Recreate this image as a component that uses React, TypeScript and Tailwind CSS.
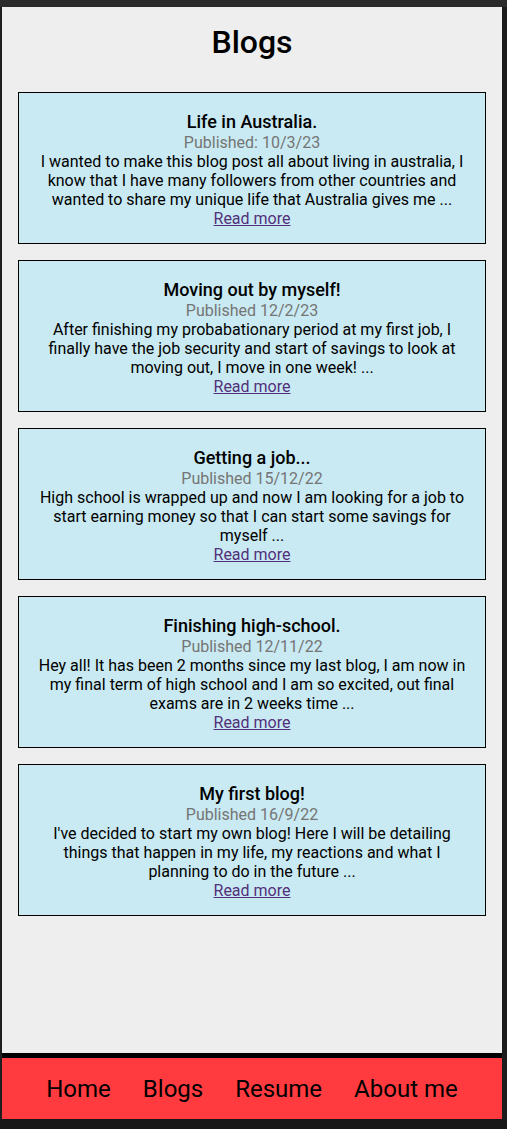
const posts = [
  {
    title: "Life in Australia.",
    date: "Published: 10/3/23",
    text: "I wanted to make this blog post all about living in australia, I know that I have many followers from other countries and wanted to share my unique life that Australia gives me ...",
  },
  {
    title: "Moving out by myself!",
    date: "Published 12/2/23",
    text: "After finishing my probabationary period at my first job, I finally have the job security and start of savings to look at moving out, I move in one week! ...",
  },
  {
    title: "Getting a job...",
    date: "Published 15/12/22",
    text: "High school is wrapped up and now I am looking for a job to start earning money so that I can start some savings for myself ...",
  },
  {
    title: "Finishing high-school.",
    date: "Published 12/11/22",
    text: "Hey all! It has been 2 months since my last blog, I am now in my final term of high school and I am so excited, out final exams are in 2 weeks time ...",
  },
  {
    title: "My first blog!",
    date: "Published 16/9/22",
    text: "I've decided to start my own blog! Here I will be detailing things that happen in my life, my reactions and what I planning to do in the future ...",
  },
];

const BlogCard = ({ post }: { post: (typeof posts)[number] }) => {
  return (
    <div className="flex flex-col items-center border border-black bg-[#c9eaf2] px-4 pt-[18px] pb-[15px] text-center">
      <h2 className="text-[18px] leading-[22px] font-medium text-black">{post.title}</h2>
      <p className="text-[16px] leading-[19px] text-[#757575]">{post.date}</p>
      <p className="text-[16px] leading-[19px] text-black">{post.text}</p>
      <a href="#" className="block text-[16px] leading-[19px] text-[#52307c] underline">
        Read more
      </a>
    </div>
  );
};

export default function App() {
  return (
    <div
      className="flex h-[1129px] w-full flex-col bg-[#2b2b2b] pt-[7px]"
      style={{ fontFamily: "Roboto, 'Noto Sans', sans-serif" }}
    >
      <div className="flex flex-1">
        <div className="w-[2px] bg-[#1e1e1e]" />
        <div className="flex w-[500px] flex-col">
          {/* page */}
          <main className="flex-1 bg-[#eeeeee] px-4 pt-[17px]">
            <h1 className="text-center text-[32px] leading-[37px] font-medium text-black">Blogs</h1>
            <div className="mt-[31px] flex flex-col gap-[16px]">
              {posts.map((p) => (
                <BlogCard key={p.title} post={p} />
              ))}
            </div>
          </main>
          <nav className="flex h-[66px] items-center justify-center gap-8 border-t-[5px] border-black bg-[#ff3b3f] text-[24px] text-black">
            <a href="#">Home</a>
            <a href="#">Blogs</a>
            <a href="#">Resume</a>
            <a href="#">About me</a>
          </nav>
        </div>
        <div className="flex-1 bg-[#1c1c1c]" />
      </div>
      <div className="h-[10px] bg-[#171717]" />
    </div>
  );
}
